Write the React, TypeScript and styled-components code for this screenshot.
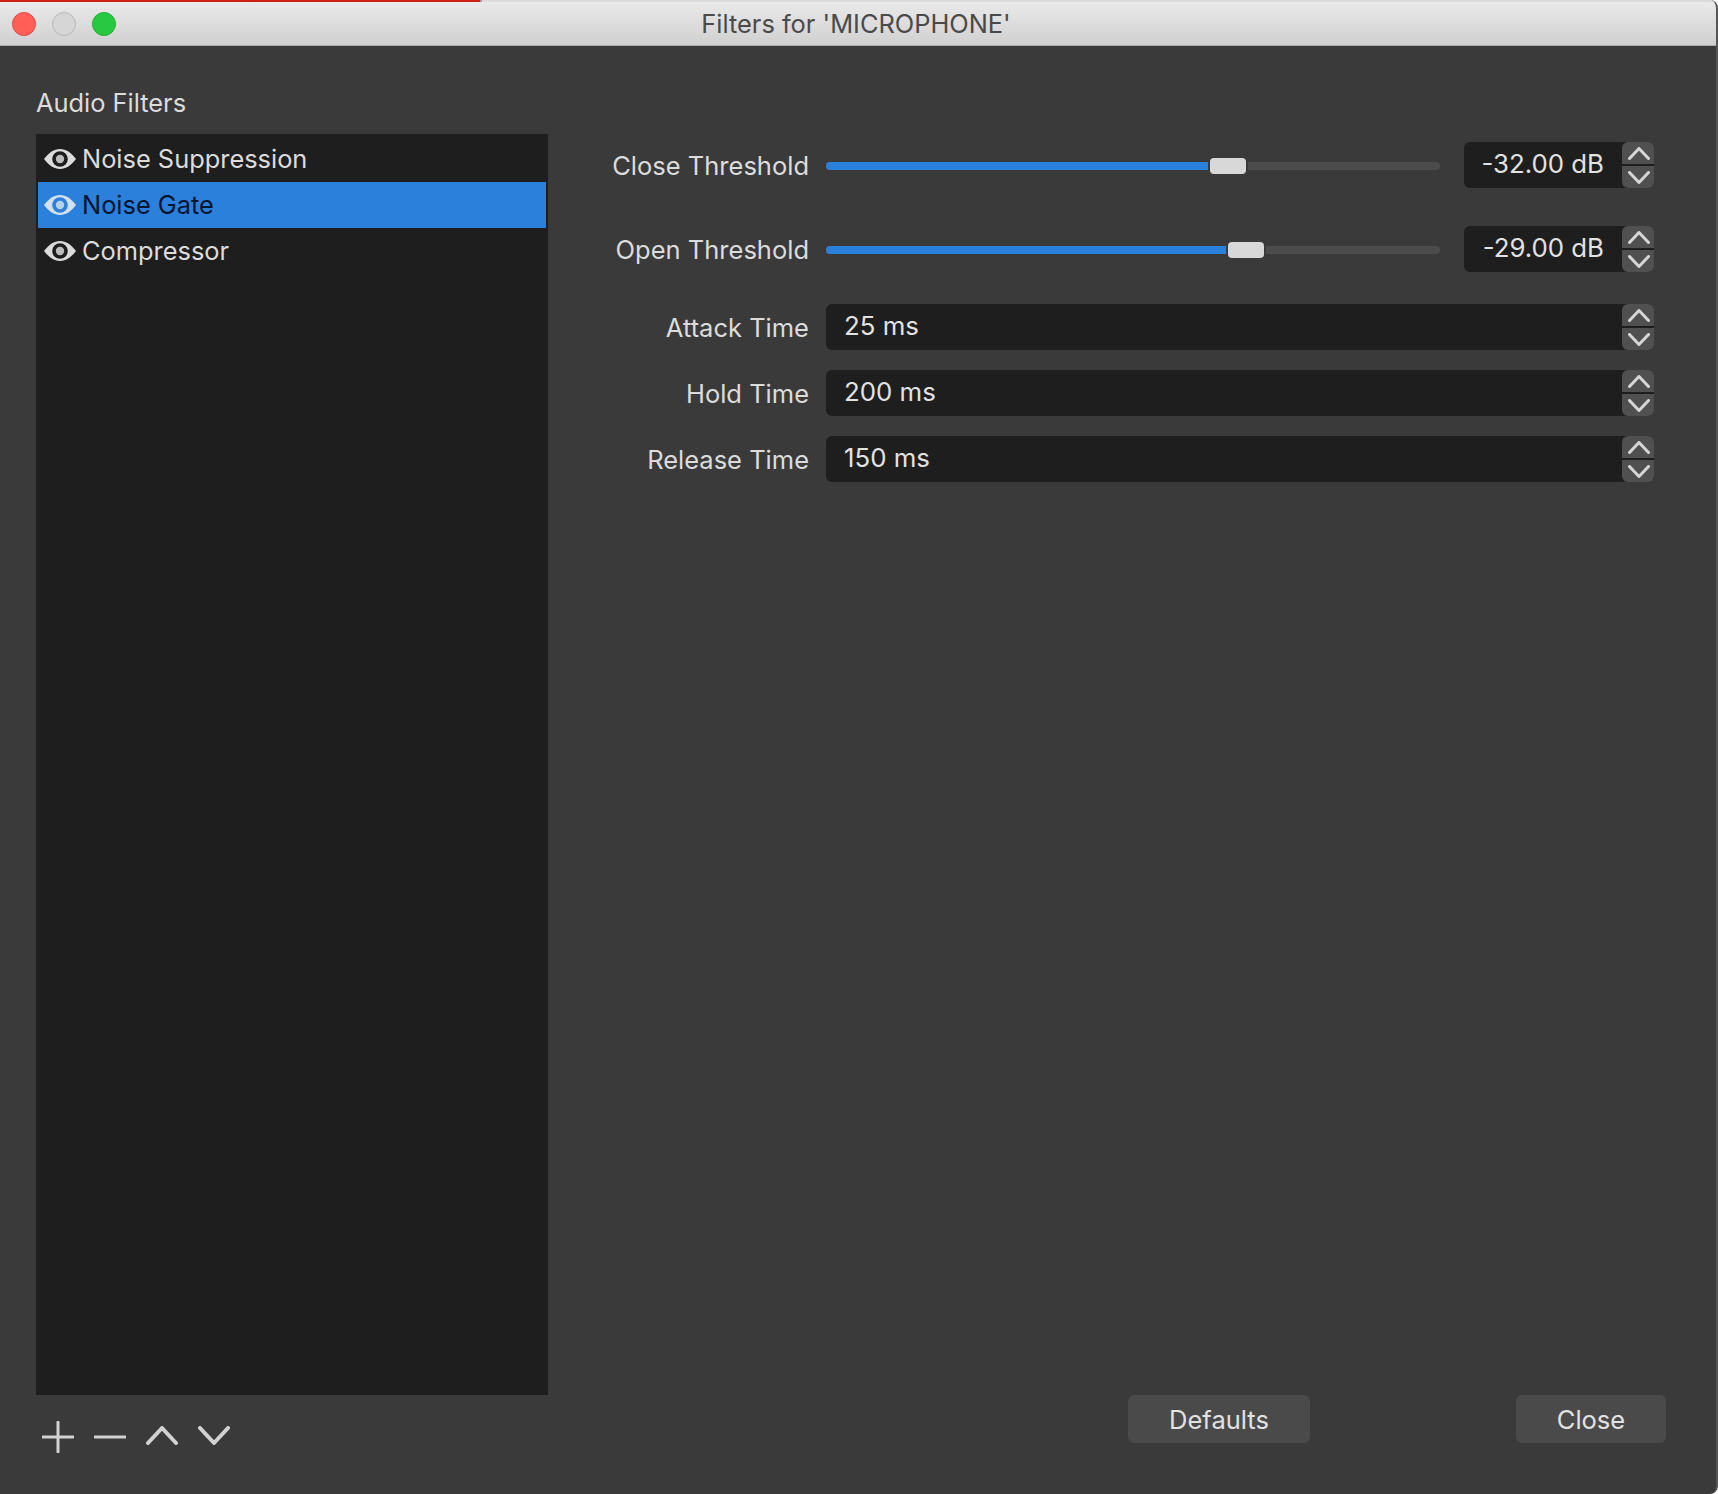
import React from "react";
import styled, {createGlobalStyle} from "styled-components";

const GlobalStyle = createGlobalStyle`
    html, body {
        margin: 0;
        padding: 0;
        background: #ffffff;
    }
    body {
        font-family: "Inter", "Liberation Sans", sans-serif;
        overflow: hidden;
    }
`;

const Window = styled.div`
    width: 1718px;
    height: 1494px;
    box-sizing: border-box;
    display: flex;
    flex-direction: column;
    background: #3a3a3a;
    border-right: 2px solid #565656;
    border-radius: 0 8px 8px 0;
    overflow: hidden;
`;

const TitleBar = styled.header`
    height: 46px;
    flex: none;
    box-sizing: border-box;
    display: flex;
    flex-direction: column;
    background: linear-gradient(#ebebeb, #d0d0d0);
    border-bottom: 1px solid #a9a9a9;
`;

const ProgressLine = styled.div`
    height: 2px;
    flex: none;
    background: #dcdcdc;
`;

const ProgressFill = styled.div<{$width: number}>`
    height: 100%;
    width: ${(p) => p.$width}px;
    background: #cf1f12;
    border-right: 2px solid #9c9c9c;
`;

const TitleRow = styled.div`
    flex: 1;
    display: grid;
    grid-template-columns: 1fr auto 1fr;
    align-items: center;
    padding: 0 16px 0 12px;
`;

const Lights = styled.div`
    display: flex;
    gap: 16px;
`;

const Light = styled.span<{$color: string; $edge: string}>`
    width: 24px;
    height: 24px;
    box-sizing: border-box;
    border-radius: 50%;
    background: ${(p) => p.$color};
    border: 1px solid ${(p) => p.$edge};
`;

const Title = styled.div`
    padding-top: 1px;
    font-size: 25.4px;
    line-height: 30px;
    color: #4a4a4a;
    white-space: nowrap;
`;

const Body = styled.div`
    flex: 1;
    min-height: 0;
    display: flex;
`;

const LeftColumn = styled.section`
    width: 512px;
    margin-left: 36px;
    flex: none;
    display: flex;
    flex-direction: column;
`;

const SectionTitle = styled.h2`
    margin: 0;
    height: 88px;
    box-sizing: border-box;
    padding: 41px 0 0 0;
    font-size: 25.4px;
    line-height: 32px;
    font-weight: 400;
    color: #dcdcdc;
`;

const FilterList = styled.ul`
    flex: 1;
    margin: 0;
    padding: 2px 2px 0;
    list-style: none;
    background: #1e1e1e;
`;

const FilterRow = styled.li<{$selected?: boolean}>`
    height: 46px;
    box-sizing: border-box;
    display: flex;
    align-items: center;
    gap: 6px;
    padding: 0 0 1px 6px;
    font-size: 25.4px;
    color: ${(p) => (p.$selected ? "#07142e" : "#dcdcdc")};
    background: ${(p) => (p.$selected ? "#2b80dc" : "transparent")};
`;

const Toolbar = styled.div`
    height: 99px;
    flex: none;
    box-sizing: border-box;
    display: flex;
    align-items: flex-start;
    gap: 20px;
    padding: 26px 0 0 6px;
`;

const ToolButton = styled.button`
    width: 32px;
    height: 32px;
    padding: 0;
    border: 0;
    background: none;
    color: #d2d2d2;
`;

const RightColumn = styled.section`
    flex: 1;
    display: flex;
    flex-direction: column;
    justify-content: space-between;
`;

const Properties = styled.div`
    display: flex;
    flex-direction: column;
    padding: 96px 62px 0 32px;
`;

const PropertyRow = styled.div<{$gapAfter: number}>`
    display: grid;
    grid-template-columns: 229px 1fr;
    column-gap: 17px;
    align-items: center;
    height: 46px;
    margin-bottom: ${(p) => p.$gapAfter}px;
`;

const Label = styled.label<{$raised?: boolean}>`
    padding-top: ${(p) => (p.$raised ? "0" : "1px")};
    text-align: right;
    font-size: 25.5px;
    color: #dcdcdc;
    white-space: nowrap;
`;

const SliderControl = styled.div`
    display: flex;
    align-items: center;
    gap: 24px;
`;

const Track = styled.div`
    position: relative;
    flex: 1;
    height: 8px;
    margin-top: 2px;
    border-radius: 4px;
    background: #4c4c4c;
`;

const TrackFill = styled.div`
    height: 100%;
    border-radius: 4px 0 0 4px;
    background: #2b80dc;
`;

const Thumb = styled.div`
    position: absolute;
    top: -4px;
    width: 36px;
    height: 16px;
    border-radius: 4px;
    background: #d8d8d8;
    box-shadow: 0 0 0 2px #3a3a3a;
`;

const SpinBox = styled.div<{$narrow?: boolean}>`
    display: flex;
    height: 46px;
    width: ${(p) => (p.$narrow ? "190px" : "100%")};
    flex: none;
    border-radius: 6px;
    background: #1e1e1e;
`;

const SpinValue = styled.div<{$narrow?: boolean}>`
    flex: 1;
    padding: ${(p) => (p.$narrow ? "0 18px 0 0" : "0 0 0 18px")};
    text-align: ${(p) => (p.$narrow ? "right" : "left")};
    font-size: 25.8px;
    line-height: 43px;
    color: #e2e2e2;
`;

const Stepper = styled.div`
    width: 32px;
    flex: none;
    display: flex;
    flex-direction: column;
    gap: 2px;
`;

const StepButton = styled.button<{$down?: boolean}>`
    flex: 1;
    padding: 0 0 0 1px;
    border: 0;
    display: flex;
    align-items: center;
    justify-content: center;
    color: #d6d6d6;
    background: #505050;
    border-radius: ${(p) => (p.$down ? "0 0 6px 6px" : "6px 6px 0 0")};
`;

const Footer = styled.div`
    display: flex;
    justify-content: flex-end;
    gap: 206px;
    padding: 0 50px 51px 0;
`;

const FooterButton = styled.button<{$width: number}>`
    width: ${(p) => p.$width}px;
    height: 48px;
    padding: 0;
    border: 0;
    border-radius: 6px;
    background: #4a4a4a;
    font-family: inherit;
    font-size: 25.5px;
    color: #e2e2e2;
`;

const EyeIcon: React.FC<{pupil: string; shade: string; ring: string}> = ({pupil, shade, ring}) => (
    <svg width="32" height="20" viewBox="0 0 32 20" style={{flex: "none"}}>
        <path fill={shade} d="M0 10C5 3.5 10 0 16 0s11 3.5 16 10c-5 6.5-10 10-16 10S5 16.5 0 10Z"/>
        <circle cx="16" cy="10" r="7.8" fill={ring}/>
        <circle cx="16" cy="10" r="4.2" fill={pupil}/>
    </svg>
);

const Chevron: React.FC<{down?: boolean; width: number; height: number; stroke: number}> = ({
    down,
    width,
    height,
    stroke,
}) => (
    <svg width={width} height={height} viewBox={`0 0 ${width} ${height}`} fill="none">
        <path
            d={
                down
                    ? `M${stroke / 2} ${stroke / 2}L${width / 2} ${height - stroke / 2}L${width - stroke / 2} ${stroke / 2}`
                    : `M${stroke / 2} ${height - stroke / 2}L${width / 2} ${stroke / 2}L${width - stroke / 2} ${height - stroke / 2}`
            }
            stroke="currentColor"
            strokeWidth={stroke}
            strokeLinecap="round"
            strokeLinejoin="round"
        />
    </svg>
);

const Spin: React.FC<{value: string; narrow?: boolean}> = ({value, narrow}) => (
    <SpinBox $narrow={narrow}>
        <SpinValue $narrow={narrow}>{value}</SpinValue>
        <Stepper>
            <StepButton>
                <Chevron width={22} height={13} stroke={3}/>
            </StepButton>
            <StepButton $down>
                <Chevron down width={22} height={13} stroke={3}/>
            </StepButton>
        </Stepper>
    </SpinBox>
);

const Slider: React.FC<{db: number}> = ({db}) => {
    const ratio = (db + 96) / 96;
    const left = `calc((100% - 38px) * ${ratio})`;
    return (
        <Track>
            <TrackFill style={{width: left}}/>
            <Thumb style={{left}}/>
        </Track>
    );
};

const filters = ["Noise Suppression", "Noise Gate", "Compressor"];

const App: React.FC = () => (
    <Window>
        <GlobalStyle/>
        <TitleBar>
            <ProgressLine>
                <ProgressFill $width={480}/>
            </ProgressLine>
            <TitleRow>
                <Lights>
                    <Light $color="#ff5f57" $edge="#e5483f"/>
                    <Light $color="#d6d6d6" $edge="#b8b8b8"/>
                    <Light $color="#28c840" $edge="#20b034"/>
                </Lights>
                <Title>Filters for 'MICROPHONE'</Title>
            </TitleRow>
        </TitleBar>
        <Body>
            <LeftColumn>
                <SectionTitle>Audio Filters</SectionTitle>
                <FilterList>
                    {filters.map((name) => (
                        <FilterRow key={name} $selected={name === "Noise Gate"}>
                            <EyeIcon
                                shade={name === "Noise Gate" ? "#d4e0f0" : "#dcdcdc"}
                                pupil={name === "Noise Gate" ? "#b9d0ec" : "#bcbcbc"}
                                ring={name === "Noise Gate" ? "#2b80dc" : "#1e1e1e"}
                            />
                            {name}
                        </FilterRow>
                    ))}
                </FilterList>
                <Toolbar>
                    <ToolButton>
                        <svg width="32" height="32" viewBox="0 0 32 32" fill="none">
                            <path d="M16 1V31M1 16H31" stroke="currentColor" strokeWidth="3" strokeLinecap="round"/>
                        </svg>
                    </ToolButton>
                    <ToolButton>
                        <svg width="32" height="32" viewBox="0 0 32 32" fill="none">
                            <path d="M1 16H31" stroke="currentColor" strokeWidth="3" strokeLinecap="round"/>
                        </svg>
                    </ToolButton>
                    <ToolButton>
                        <Chevron width={32} height={19} stroke={4}/>
                    </ToolButton>
                    <ToolButton>
                        <Chevron down width={32} height={19} stroke={4}/>
                    </ToolButton>
                </Toolbar>
            </LeftColumn>
            <RightColumn>
                <Properties>
                    <PropertyRow $gapAfter={38}>
                        <Label $raised>Close Threshold</Label>
                        <SliderControl>
                            <Slider db={-32}/>
                            <Spin narrow value="-32.00 dB"/>
                        </SliderControl>
                    </PropertyRow>
                    <PropertyRow $gapAfter={32}>
                        <Label $raised>Open Threshold</Label>
                        <SliderControl>
                            <Slider db={-29}/>
                            <Spin narrow value="-29.00 dB"/>
                        </SliderControl>
                    </PropertyRow>
                    <PropertyRow $gapAfter={20}>
                        <Label>Attack Time</Label>
                        <Spin value="25 ms"/>
                    </PropertyRow>
                    <PropertyRow $gapAfter={20}>
                        <Label>Hold Time</Label>
                        <Spin value="200 ms"/>
                    </PropertyRow>
                    <PropertyRow $gapAfter={0}>
                        <Label>Release Time</Label>
                        <Spin value="150 ms"/>
                    </PropertyRow>
                </Properties>
                <Footer>
                    <FooterButton $width={182}>Defaults</FooterButton>
                    <FooterButton $width={150}>Close</FooterButton>
                </Footer>
            </RightColumn>
        </Body>
    </Window>
);

export default App;
